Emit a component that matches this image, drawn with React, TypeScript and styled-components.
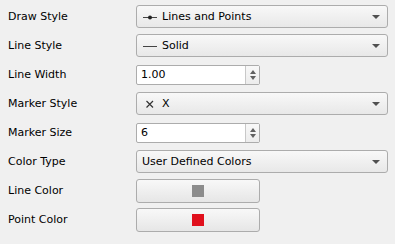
import React from 'react';
import styled, { createGlobalStyle } from 'styled-components';

const GlobalStyle = createGlobalStyle`
    html, body {
        margin: 0;
        padding: 0;
        background: #f0f0f0;
    }
    body {
        font-family: "DejaVu Sans", "Liberation Sans", sans-serif;
        font-size: 11px;
        color: #000;
    }
`;

const Panel = styled.div`
    width: 395px;
    height: 244px;
    padding-top: 2px;
    box-sizing: border-box;
    display: flex;
    flex-direction: column;
`;

const Row = styled.div`
    height: 29px;
    display: grid;
    grid-template-columns: 136px 1fr;
    align-items: center;
`;

const Label = styled.div`
    padding-left: 8px;
    white-space: nowrap;
`;

const Combo = styled.div`
    width: 252px;
    height: 23px;
    box-sizing: border-box;
    border: 1px solid #acacac;
    border-radius: 3px;
    background: linear-gradient(#f8f8f8, #e8e8e8);
    display: flex;
    align-items: center;
    padding-left: 5px;
    padding-right: 7px;
`;

const ComboIcon = styled.span`
    width: 16px;
    height: 16px;
    margin-right: 4px;
    display: flex;
    align-items: center;
    justify-content: center;
`;

const ComboText = styled.span`
    flex: 1;
    white-space: nowrap;
`;

const Arrow = styled.span`
    width: 0;
    height: 0;
    border-left: 4px solid transparent;
    border-right: 4px solid transparent;
    border-top: 4px solid #505050;
`;

const Spin = styled.div`
    width: 124px;
    height: 20px;
    box-sizing: border-box;
    border: 1px solid #acacac;
    border-radius: 2px;
    background: #fff;
    display: flex;
    align-items: stretch;
`;

const SpinValue = styled.span`
    flex: 1;
    padding-left: 4px;
    display: flex;
    align-items: center;
`;

const SpinButtons = styled.span`
    width: 13px;
    border-left: 1px solid #c8c8c8;
    background: linear-gradient(#f8f8f8, #ececec);
    display: flex;
    flex-direction: column;
    align-items: center;
    justify-content: center;
    gap: 2px;
`;

const SpinArrow = styled.span<{ $up?: boolean }>`
    width: 0;
    height: 0;
    border-left: 3.5px solid transparent;
    border-right: 3.5px solid transparent;
    ${p => p.$up ? 'border-bottom: 4px solid #606060;' : 'border-top: 4px solid #606060;'}
`;

const ColorButton = styled.div`
    width: 124px;
    height: 24px;
    box-sizing: border-box;
    border: 1px solid #acacac;
    border-radius: 3px;
    background: linear-gradient(#f8f8f8, #e6e6e6);
    display: flex;
    align-items: center;
    justify-content: center;
`;

const Swatch = styled.span<{ $color: string }>`
    width: 12px;
    height: 12px;
    background: ${p => p.$color};
`;

function LinePointsIcon() {
    return (
        <svg width='16' height='16' viewBox='0 0 16 16'>
            <line x1='1' y1='8.5' x2='15' y2='8.5' stroke='#444' strokeWidth='1' />
            <circle cx='8' cy='8.5' r='2' fill='#222' />
        </svg>
    );
}

function SolidIcon() {
    return (
        <svg width='16' height='16' viewBox='0 0 16 16'>
            <line x1='1' y1='8.5' x2='15' y2='8.5' stroke='#444' strokeWidth='1' />
        </svg>
    );
}

function CrossIcon() {
    return (
        <svg width='16' height='16' viewBox='0 0 16 16'>
            <path d='M4.5 5L11 11.5M11 5L4.5 11.5' stroke='#333' strokeWidth='1.2' />
        </svg>
    );
}

function App() {
    return (
        <Panel>
            <GlobalStyle />
            <Row>
                <Label>Draw Style</Label>
                <Combo>
                    <ComboIcon><LinePointsIcon /></ComboIcon>
                    <ComboText>Lines and Points</ComboText>
                    <Arrow />
                </Combo>
            </Row>
            <Row>
                <Label>Line Style</Label>
                <Combo>
                    <ComboIcon><SolidIcon /></ComboIcon>
                    <ComboText>Solid</ComboText>
                    <Arrow />
                </Combo>
            </Row>
            <Row>
                <Label>Line Width</Label>
                <Spin>
                    <SpinValue>1.00</SpinValue>
                    <SpinButtons><SpinArrow $up /><SpinArrow /></SpinButtons>
                </Spin>
            </Row>
            <Row>
                <Label>Marker Style</Label>
                <Combo>
                    <ComboIcon><CrossIcon /></ComboIcon>
                    <ComboText>X</ComboText>
                    <Arrow />
                </Combo>
            </Row>
            <Row>
                <Label>Marker Size</Label>
                <Spin>
                    <SpinValue>6</SpinValue>
                    <SpinButtons><SpinArrow $up /><SpinArrow /></SpinButtons>
                </Spin>
            </Row>
            <Row>
                <Label>Color Type</Label>
                <Combo>
                    <ComboText>User Defined Colors</ComboText>
                    <Arrow />
                </Combo>
            </Row>
            <Row>
                <Label>Line Color</Label>
                <ColorButton><Swatch $color='#8c8c8c' /></ColorButton>
            </Row>
            <Row>
                <Label>Point Color</Label>
                <ColorButton><Swatch $color='#e0101c' /></ColorButton>
            </Row>
        </Panel>
    );
}

export default App;
